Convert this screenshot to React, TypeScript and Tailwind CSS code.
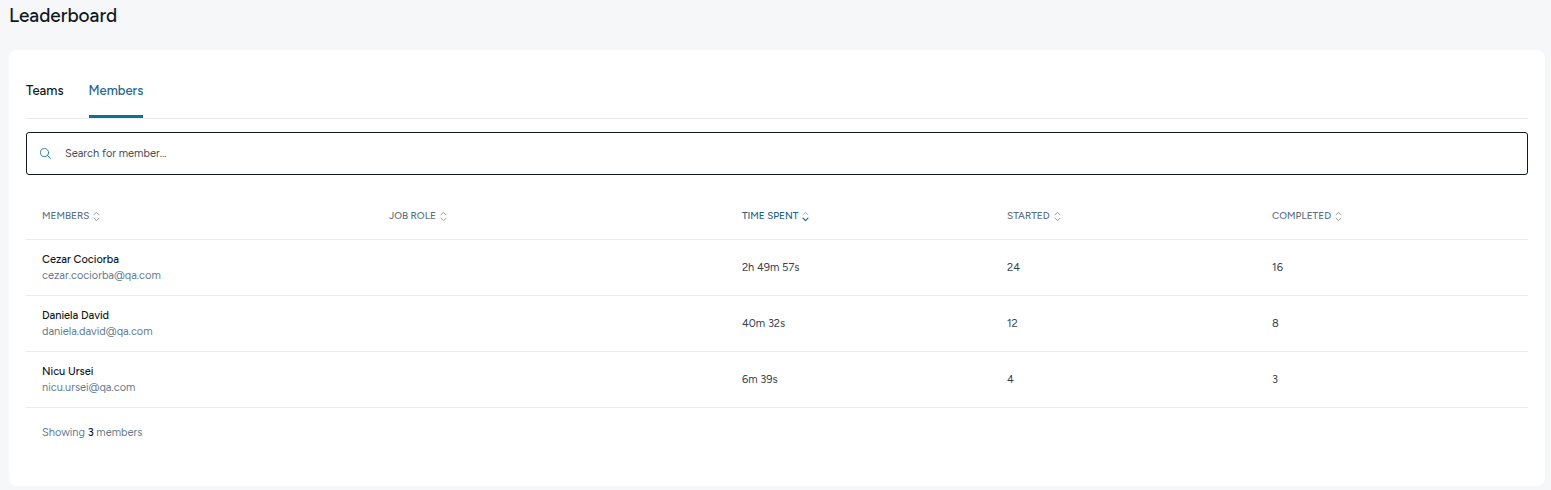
import { useState } from 'react';

const columns = [
    { key: 'members', label: 'Members', width: 'w-[23.1%]' },
    { key: 'role', label: 'Job role', width: 'w-[23.5%]' },
    { key: 'time', label: 'Time spent', width: 'w-[17.65%]' },
    { key: 'started', label: 'Started', width: 'w-[17.65%]' },
    { key: 'completed', label: 'Completed', width: 'w-auto' },
];

const members = [
    { name: 'Cezar Cociorba', email: 'cezar.cociorba@qa.com', role: '', time: '2h 49m 57s', started: 24, completed: 16 },
    { name: 'Daniela David', email: 'daniela.david@qa.com', role: '', time: '40m 32s', started: 12, completed: 8 },
    { name: 'Nicu Ursei', email: 'nicu.ursei@qa.com', role: '', time: '6m 39s', started: 4, completed: 3 },
];

function SortIcon({ active }: { active: boolean }) {
    return (
        <svg width="7" height="11" viewBox="0 0 7 11" fill="none" strokeLinecap="round" strokeLinejoin="round" aria-hidden="true">
            <path d="M1 3.8L3.5 1.3L6 3.8" stroke={active ? '#8fbccb' : '#969ba0'} />
            <path d="M1 7.2L3.5 9.7L6 7.2" stroke={active ? '#0b6f90' : '#969ba0'} strokeWidth={active ? 1.2 : 1} />
        </svg>
    );
}

function SearchIcon() {
    return (
        <svg width="11" height="11" viewBox="0 0 12 12" fill="none" stroke="#16789a" strokeLinecap="round" aria-hidden="true">
            <circle cx="5" cy="5" r="4.4" />
            <path d="M8.2 8.2L11.4 11.4" />
        </svg>
    );
}

function Tabs() {
    const [tab, setTab] = useState('Members');

    return (
        <div role="tablist" className="flex gap-[25px] border-b border-[#ebecee] text-[13px] leading-4 font-medium">
            {['Teams', 'Members'].map((name) => (
                <button
                    key={name}
                    type="button"
                    role="tab"
                    aria-selected={tab === name}
                    onClick={() => setTab(name)}
                    className={
                        tab === name
                            ? 'border-b-3 border-[#0b7294] pb-4 text-[#1d6488]'
                            : 'border-b-3 border-transparent pb-4 text-[#111820]'
                    }
                >
                    {name}
                </button>
            ))}
        </div>
    );
}

function MembersTable() {
    return (
        <table className="mt-4 w-full table-fixed text-left text-[11px] leading-4">
            <thead>
                <tr className="h-12 border-b border-[#ebecee]">
                    {columns.map((column) => (
                        <th key={column.key} scope="col" className={`${column.width} px-4 pt-[3px] font-medium`}>
                            <button
                                type="button"
                                className={
                                    column.key === 'time'
                                        ? 'flex items-center gap-1 text-[10px] leading-4 uppercase text-[#1d6488]'
                                        : 'flex items-center gap-1 text-[10px] leading-4 uppercase text-[#5c6f80]'
                                }
                            >
                                {column.label}
                                <SortIcon active={column.key === 'time'} />
                            </button>
                        </th>
                    ))}
                </tr>
            </thead>
            <tbody className="text-[#36424c]">
                {members.map((member) => (
                    <tr key={member.email} className="h-14 border-b border-[#ebecee]">
                        <td className="px-4 pt-0.5">
                            <div className="font-medium text-[#111820]">{member.name}</div>
                            <div className="text-[#667c8e]">{member.email}</div>
                        </td>
                        <td className="px-4 pt-0.5">{member.role}</td>
                        <td className="px-4 pt-0.5">{member.time}</td>
                        <td className="px-4 pt-0.5">{member.started}</td>
                        <td className="px-4 pt-0.5">{member.completed}</td>
                    </tr>
                ))}
            </tbody>
        </table>
    );
}

function App() {
    return (
        <div className="min-h-screen bg-[#f5f7f9] pr-1.5 pb-1 pl-[9px] font-['Figtree','Inter',sans-serif]">
            <h1 className="pt-1 pb-[22px] text-[19px] leading-6 font-medium text-[#111820]">Leaderboard</h1>
            <main className="rounded-lg bg-white px-[17px] pt-[33px] pb-[45px]">
                <Tabs />
                <div className="mt-[13px] flex h-[43px] items-center gap-3.5 rounded-[3px] border border-[#111820] px-[13px]">
                    <SearchIcon />
                    <input
                        type="text"
                        aria-label="Search for member"
                        placeholder="Search for member..."
                        className="min-w-0 flex-1 text-[11px] leading-4 text-[#36424c] outline-none placeholder:text-[#4a4f55]"
                    />
                </div>
                <MembersTable />
                <p className="mt-[17px] px-4 text-[11px] leading-4 text-[#667c8e]">
                    Showing <span className="font-medium text-[#111820]">{members.length}</span> members
                </p>
            </main>
        </div>
    );
}

export default App;
